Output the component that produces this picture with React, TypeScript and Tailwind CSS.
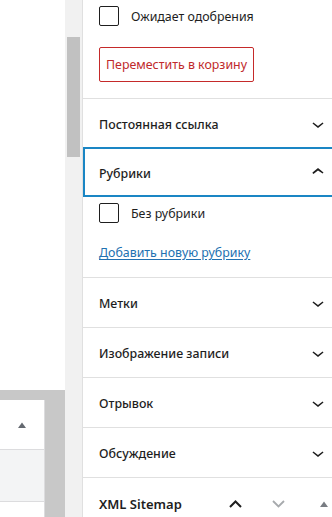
const ChevronDown = () => (
  <svg width="24" height="24" viewBox="0 0 24 24" className="fill-[#1e1e1e]">
    <path d="M17.5 11.6L12 16l-5.5-4.4.9-1.2L12 14l4.6-3.6z" />
  </svg>
);

const ChevronUp = () => (
  <svg width="24" height="24" viewBox="0 0 24 24" className="fill-[#1e1e1e]">
    <path d="M6.5 12.4L12 8l5.5 4.4-.9 1.2L12 10.5l-4.6 3.6-.9-1.2z" />
  </svg>
);

const Triangle = ({ color }: { color: string }) => (
  <svg width="8" height="6" viewBox="0 0 8 6">
    <polygon points="0,6 4,0.5 8,6" fill={color} />
  </svg>
);

function Checkbox({ label }: { label: string }) {
  return (
    <div className="flex items-center gap-[12px] h-[20px]">
      <span className="w-[20px] h-[20px] border border-[#1e1e1e] rounded-[2px] bg-white shrink-0" />
      <span className="text-[12.4px] leading-[20px] text-[#1e1e1e] relative top-px">{label}</span>
    </div>
  );
}

function Panel({ title }: { title: string }) {
  return (
    <div className="border-t border-[#e0e0e0]">
      <div className="h-[49px] flex items-center justify-between pl-[16px] pr-[4px]">
        <span className="text-[12.4px] font-medium text-[#1e1e1e] relative top-[2px]">{title}</span>
        <ChevronDown />
      </div>
    </div>
  );
}

export default function App() {
  return (
    <div className="flex w-[332px] h-[517px] overflow-hidden bg-white font-['Noto_Sans',sans-serif]">
      {/* editor canvas edge + metabox area */}
      <div className="w-[65px] shrink-0 flex flex-col">
        <div className="h-[390px] bg-white" />
        <div className="flex-1 bg-[#c8c8c8] pt-[10px] pr-[20px]">
          <div className="h-full bg-white border-r border-[#dcdcde]">
            <div className="h-[50px] border-b border-[#dcdcde] flex items-center justify-center">
              <Triangle color="#646970" />
            </div>
            <div className="h-[52px] bg-[#f3f4f5] border-b border-[#dcdcde]" />
          </div>
        </div>
      </div>

      {/* scrollbar */}
      <div className="w-[17px] shrink-0 bg-[#f1f1f1] pt-[37px] pl-[2px] pr-[2px]">
        <div className="h-[120px] bg-[#c1c1c1]" />
      </div>

      {/* sidebar */}
      <div className="w-[252px] shrink-0 border-l border-[#e0e0e0] bg-white">
        <div className="px-[16px] pt-[6px] pb-[16px]">
          <Checkbox label="Ожидает одобрения" />
          <button className="mt-[21px] h-[35px] px-[6px] border border-[#c52a2a] rounded-[2px] text-[12.4px] text-[#c0292b] bg-white">
            <span className="relative top-px">Переместить в корзину</span>
          </button>
        </div>

        <Panel title="Постоянная ссылка" />

        <div>
          <div className="-mt-px h-[50px] flex items-center justify-between pl-[16px] pr-[4px] shadow-[inset_0_0_0_2px_#1a86c4]">
            <span className="text-[12.4px] font-medium text-[#1e1e1e] relative top-[2px]">Рубрики</span>
            <ChevronUp />
          </div>
          <div className="px-[16px] pt-[6px] pb-[15px]">
            <Checkbox label="Без рубрики" />
            <a href="#" className="block mt-[19px] leading-[20px] text-[12.4px] text-[#2271b1] underline underline-offset-2 relative top-px">
              Добавить новую рубрику
            </a>
          </div>
        </div>

        <Panel title="Метки" />
        <Panel title="Изображение записи" />
        <Panel title="Отрывок" />
        <Panel title="Обсуждение" />

        <div className="border-t border-[#e0e0e0]">
          <div className="h-[49px] flex items-center pl-[16px] pr-[6px]">
            <span className="text-[13px] font-semibold text-[#1e1e1e] relative top-[2px]">XML Sitemap</span>
            <div className="ml-auto flex items-center pt-[2px]">
              <svg width="13" height="8" viewBox="0 0 13 8">
                <polyline points="1,7 6.5,1.5 12,7" fill="none" stroke="#1e1e1e" strokeWidth="2" />
              </svg>
              <svg width="13" height="8" viewBox="0 0 13 8" className="ml-[30px]">
                <polyline points="1,1 6.5,6.5 12,1" fill="none" stroke="#a7aaad" strokeWidth="1.8" />
              </svg>
              <span className="ml-[35px] flex">
                <Triangle color="#787c82" />
              </span>
            </div>
          </div>
        </div>
      </div>
    </div>
  );
}
